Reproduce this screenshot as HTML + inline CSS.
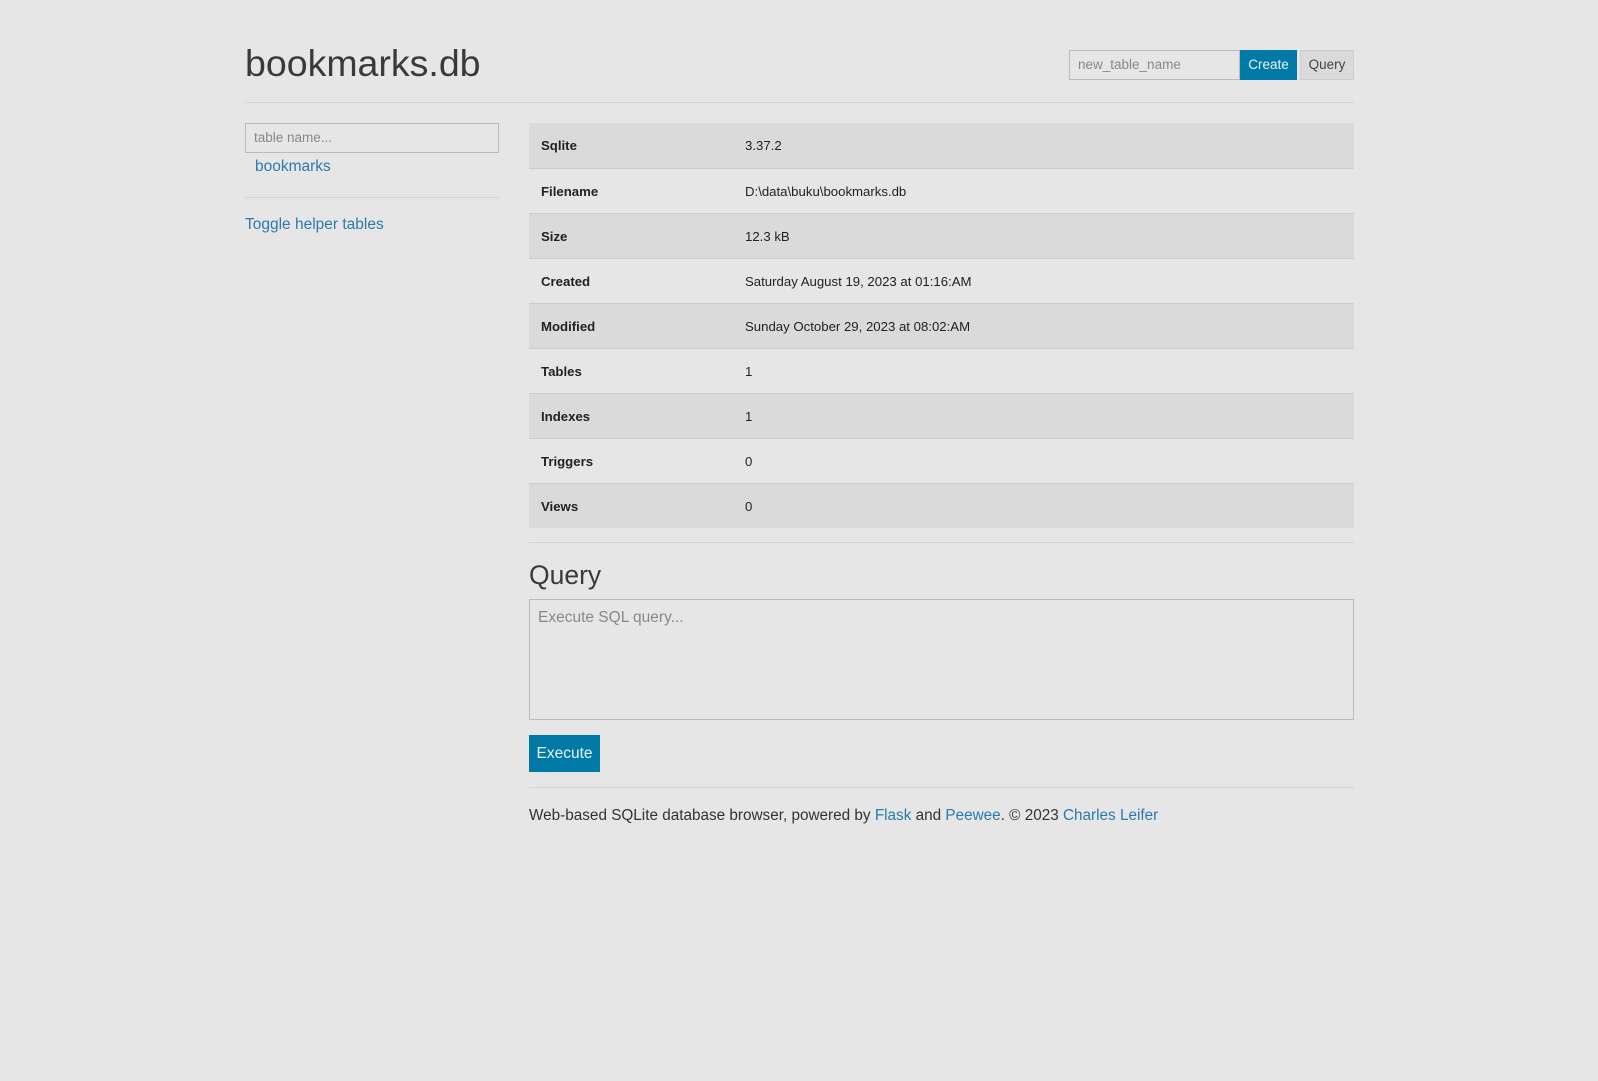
<!DOCTYPE html>
<html><head><style>
body{margin:0;background:#e6e6e6;font-family:"Liberation Sans",sans-serif;color:#222;width:1598px;height:1081px;overflow:hidden}
a{color:#2a7ab0;text-decoration:none}
.wrap{position:absolute;left:245px;width:1109px;top:0}
h1{position:absolute;left:0;top:42px;margin:0;font-weight:normal;font-size:37.5px;color:#3a3a3a;letter-spacing:0px}
.hr{position:absolute;height:1px;background:#d4d4d4}
.inp{position:absolute;box-sizing:border-box;border:1px solid #bbb;background:#e6e6e6;color:#888;font-size:13.5px;padding:0 8px}
table{position:absolute;left:284px;top:123px;width:825px;border-collapse:collapse;font-size:13.2px}
td{height:44px;padding:0 12px;border-top:1px solid #ccc}
tr:first-child td{border-top:none;height:45px}
tr:nth-child(odd) td{background:#dadada}
td:first-child{font-weight:bold;width:180px}
</style></head><body>
<div class="wrap">
<h1>bookmarks.db</h1>
<div class="inp" style="left:824px;top:50px;width:171px;height:30px;line-height:28px">new_table_name</div>
<div style="position:absolute;left:995px;top:50px;width:57px;height:30px;background:#0079a6;color:#e8f4f8;font-size:13.5px;line-height:30px;text-align:center">Create</div>
<div style="position:absolute;left:1055px;top:50px;width:54px;height:30px;box-sizing:border-box;border:1px solid #ccc;background:#dadada;color:#444;font-size:13.5px;line-height:28px;text-align:center">Query</div>
<div class="hr" style="left:0;top:102px;width:1109px"></div>
<div class="inp" style="left:0;top:123px;width:254px;height:30px;line-height:28px">table name...</div>
<a style="position:absolute;left:10px;top:158px;font-size:15.5px">bookmarks</a>
<div class="hr" style="left:0;top:197px;width:254px"></div>
<a style="position:absolute;left:0;top:216px;font-size:15.5px">Toggle helper tables</a>
<table>
<tr><td>Sqlite</td><td>3.37.2</td></tr>
<tr><td>Filename</td><td>D:\data\buku\bookmarks.db</td></tr>
<tr><td>Size</td><td>12.3 kB</td></tr>
<tr><td>Created</td><td>Saturday August 19, 2023 at 01:16:AM</td></tr>
<tr><td>Modified</td><td>Sunday October 29, 2023 at 08:02:AM</td></tr>
<tr><td>Tables</td><td>1</td></tr>
<tr><td>Indexes</td><td>1</td></tr>
<tr><td>Triggers</td><td>0</td></tr>
<tr><td>Views</td><td>0</td></tr>
</table>
<div class="hr" style="left:284px;top:542px;width:825px"></div>
<div style="position:absolute;left:284px;top:560px;font-size:26.5px;color:#3a3a3a">Query</div>
<div class="inp" style="left:284px;top:599px;width:825px;height:121px;padding:9px 8px;font-size:15.5px">Execute SQL query...</div>
<div style="position:absolute;left:284px;top:735px;width:71px;height:37px;background:#0079a6;color:#e8f4f8;font-size:15.5px;line-height:37px;text-align:center">Execute</div>
<div class="hr" style="left:284px;top:787px;width:825px"></div>
<div style="position:absolute;left:284px;top:807px;font-size:15.3px;color:#333">Web-based SQLite database browser, powered by <a>Flask</a> and <a>Peewee</a>. © 2023 <a>Charles Leifer</a></div>
</div>
</body></html>
